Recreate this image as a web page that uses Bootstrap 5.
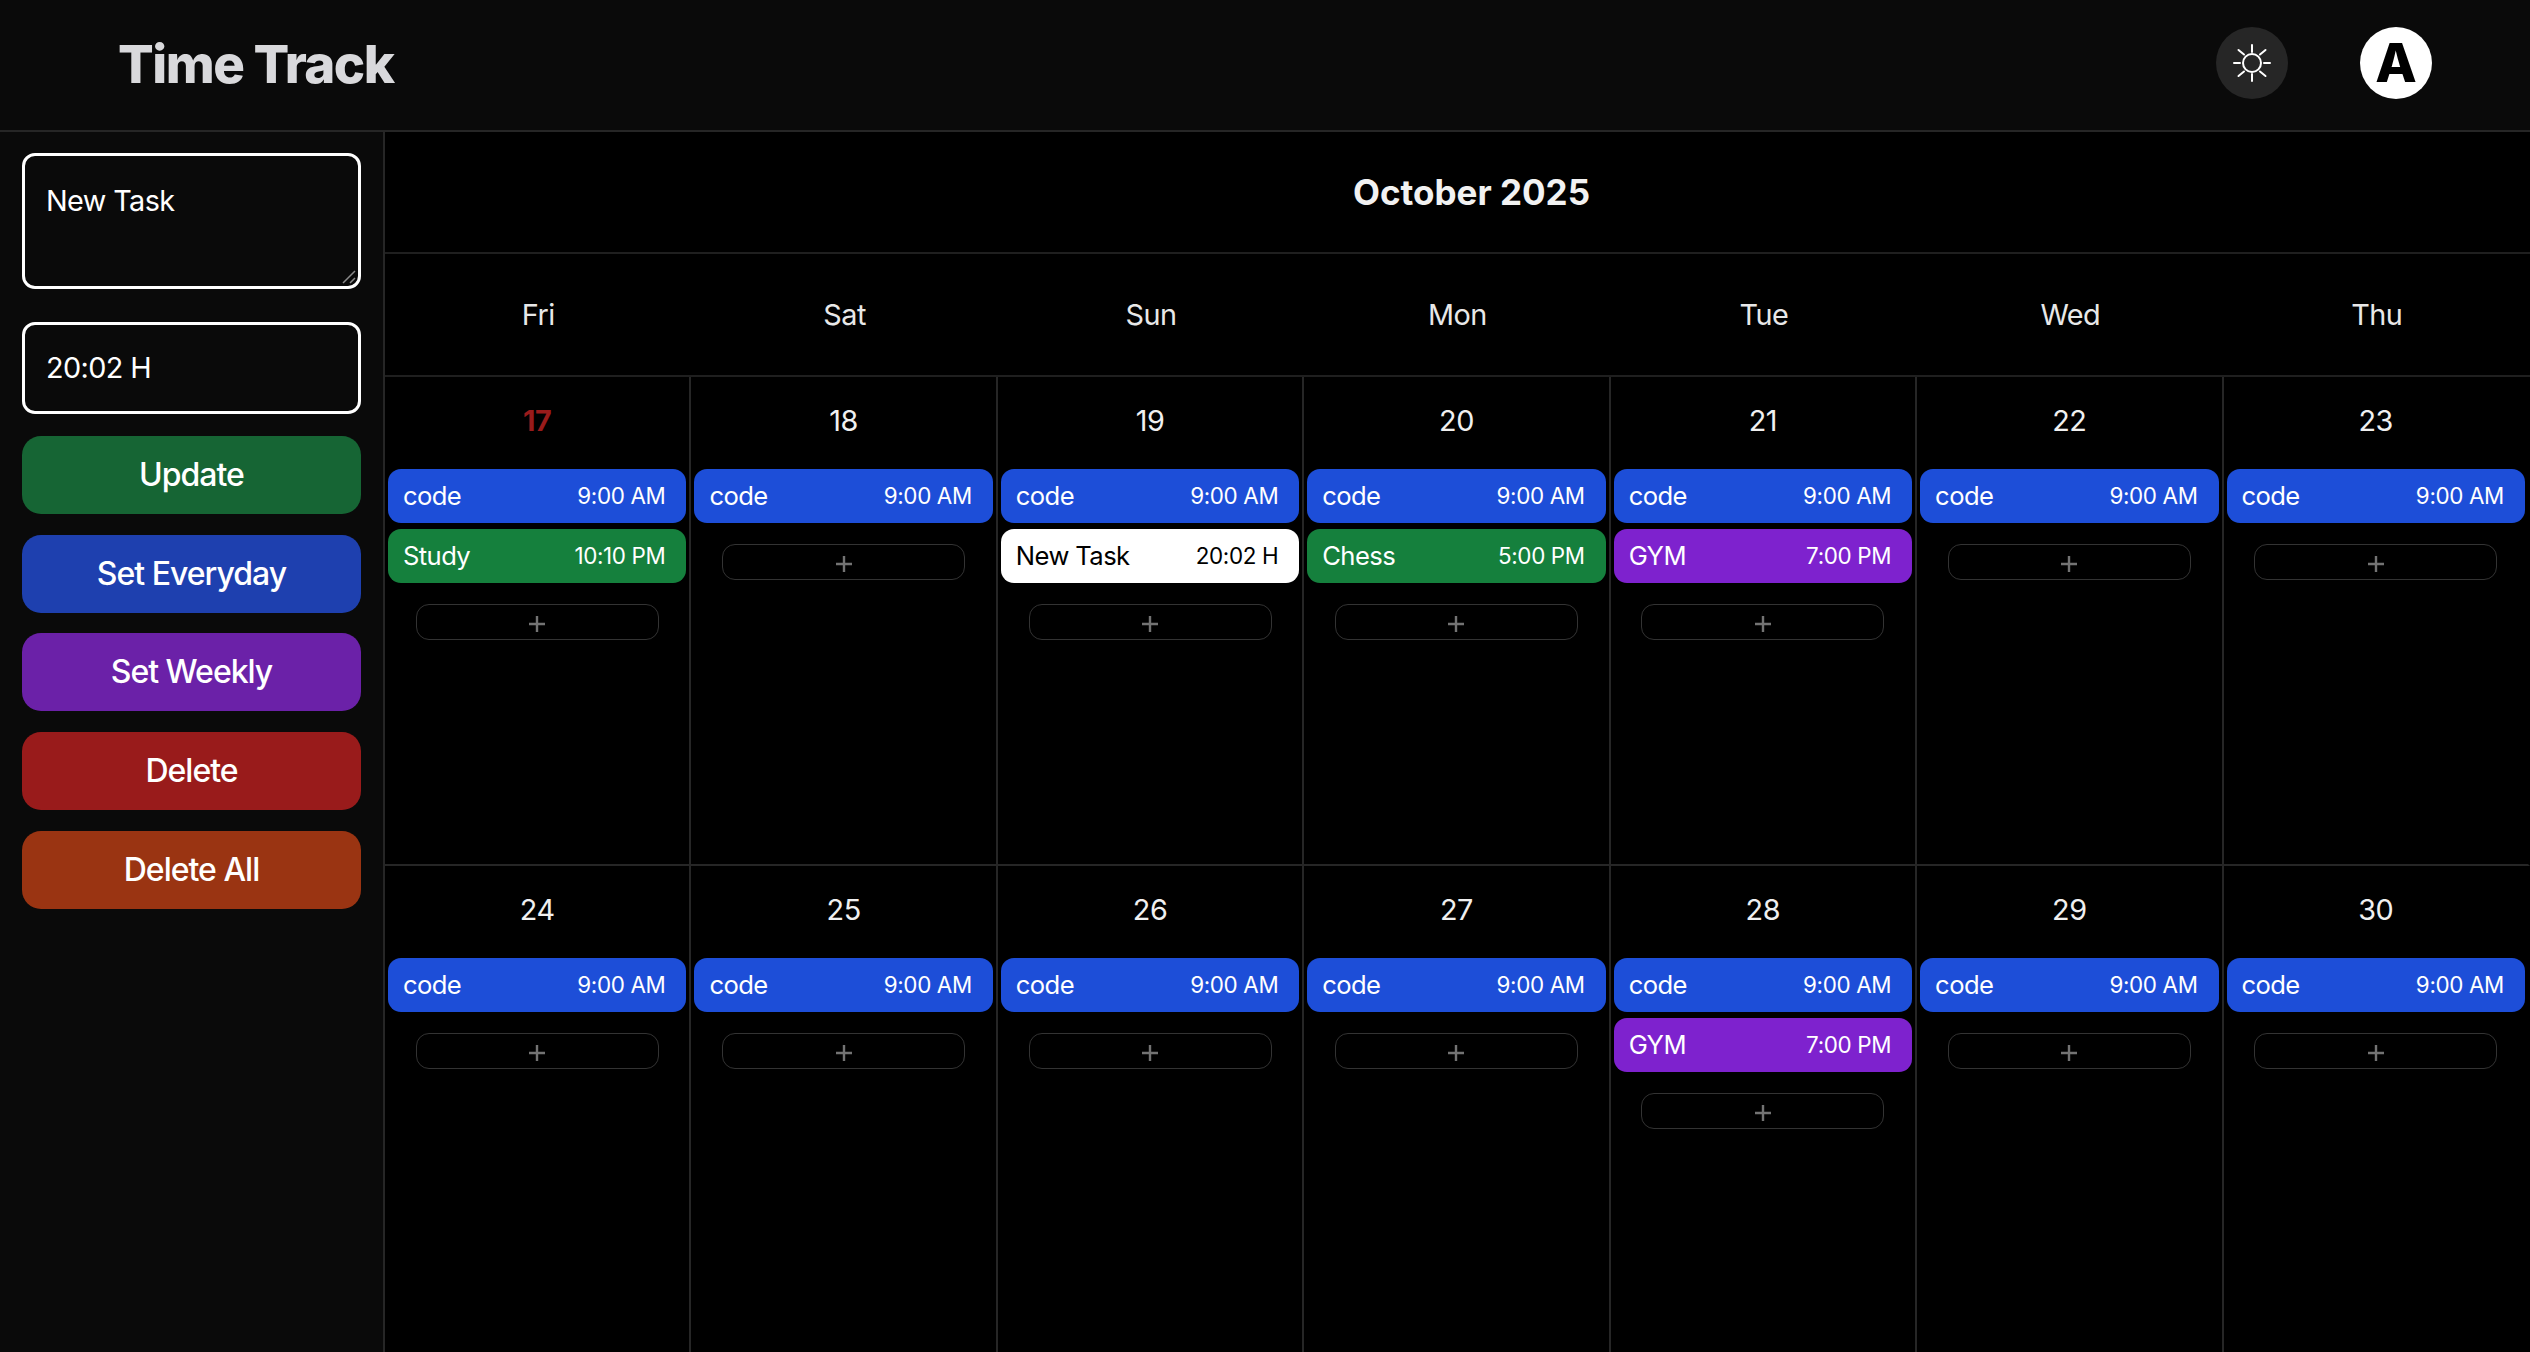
<!doctype html>
<html lang="en">
<head>
<meta charset="utf-8">
<title>Time Track</title>
<link href="https://cdn.jsdelivr.net/npm/bootstrap@5.3.0/dist/css/bootstrap.min.css" rel="stylesheet">
<style>
html,body{height:100%;}
body{background:#000;color:#fff;font-family:Inter,"Liberation Sans",sans-serif;overflow:hidden;}
.tt-top{height:132px;background:#0a0a0a;border-bottom:2px solid #262626;padding:0 98px 4px 118px;}
.tt-title{font-size:52.8px;font-weight:800;color:#d9d9dc;letter-spacing:-1.5px;margin:2px 0 0;line-height:1;}
.tt-sun{width:72px;height:72px;background:#262626;border:0;padding:0;color:#fff;margin-right:72px;}
.tt-ava{width:72px;height:72px;background:#fff;color:#000;font-size:54px;font-weight:800;line-height:1;}
.tt-main{height:1220px;}
.tt-side{width:385px;flex:0 0 385px;background:#0a0a0a;border-right:2px solid #262626;padding:21px 22px 0;}
.tt-box{margin-bottom:33px;}
.tt-grip{position:absolute;right:5px;bottom:5px;}
.tt-field{background:#0a0a0a!important;color:#fff!important;border:3px solid #fff!important;border-radius:13px;font-size:28.8px;letter-spacing:-.6px;padding:20px 21px;box-shadow:none!important;line-height:1.4;}
textarea.tt-field{height:136px;resize:none;padding-top:25px;}
input.tt-field{height:92px;margin-bottom:21.750px;padding-bottom:22px;}
.tt-act{height:78px;border:0;border-radius:19px;color:#fff;font-size:32px;font-weight:500;letter-spacing:-1px;margin-bottom:20.750px;padding:0;line-height:1;}
.tt-act:hover,.tt-act:active{color:#fff!important;}
.a-g{background:#166534!important;}.a-b{background:#1e40af!important;}.a-p{background:#6b21a8!important;}.a-r{background:#991b1b!important;}.a-o{background:#9a3412!important;}
.tt-cal{min-width:0;}
.tt-month{height:122px;font-size:35px;font-weight:700;color:#f2f2f2;border-bottom:2px solid #1f1f1f;padding-left:28px;}
.tt-wk{height:123px;font-size:28.8px;letter-spacing:-.5px;color:#e8e8e8;border-bottom:2px solid #1f1f1f;}
.tt-wk .col{text-align:center;}
.tt-cell{height:489px;border-right:2px solid #262626;border-bottom:2px solid #262626;padding:0 3px;}
.tt-cell:last-child{border-right-color:transparent;}
.tt-low .tt-cell{height:520px;}
.tt-day{height:92px;padding-top:26px;font-size:28.8px;letter-spacing:-.4px;line-height:36px;text-align:center;color:#f0f0f0;}
.tt-today{color:#991b1b;font-weight:700;}
.tt-ev{height:54px;border-radius:13px;margin-bottom:6px;padding:0 21px 0 15px;color:#fff;font-size:25.6px;letter-spacing:-.6px;line-height:1;}
.tt-ev span:last-child{font-size:22.4px;letter-spacing:-.35px;}
.e-b{background:#1d4ed8;}.e-g{background:#15803d;}.e-p{background:#7e22ce;}.e-w{background:#fff;color:#000;}
.tt-add{display:flex;align-items:center;justify-content:center;width:243px;height:36px;margin:21px auto 0;background:transparent;border:1.500px solid #333;border-radius:13px;padding:3px 0 0;color:#737373;}
</style>
</head>
<body>
<header class="tt-top d-flex align-items-center justify-content-between">
  <h1 class="tt-title">Time Track</h1>
  <div class="d-flex align-items-center">
    <button type="button" class="tt-sun rounded-circle d-flex align-items-center justify-content-center" aria-label="Theme">
      <svg width="40" height="40" viewBox="0 0 40 40" fill="none" stroke="currentColor" stroke-width="2" stroke-linecap="round"><circle cx="20" cy="20" r="9"/><path d="M20 2v7M20 31v7M2 20h6M32 20h6M6.500 7l5.500 4.500M28 28.500l5.500 4.500M6.500 33l5.500-4.500M28 11.500l5.500-4.500"/></svg>
    </button>
    <div class="tt-ava rounded-circle d-flex align-items-center justify-content-center">A</div>
  </div>
</header>
<div class="tt-main d-flex">
  <aside class="tt-side">
    <div class="tt-box position-relative">
      <textarea class="form-control tt-field">New Task</textarea>
      <svg class="tt-grip" width="14" height="14" viewBox="0 0 14 14" fill="none" stroke="#8a8a8a" stroke-width="1.500"><path d="M1 13 13 1M8 13l5-5"/></svg>
    </div>
    <input class="form-control tt-field" type="text" value="20:02 H">
    <button class="btn tt-act a-g w-100 d-block">Update</button>
    <button class="btn tt-act a-b w-100 d-block">Set Everyday</button>
    <button class="btn tt-act a-p w-100 d-block">Set Weekly</button>
    <button class="btn tt-act a-r w-100 d-block">Delete</button>
    <button class="btn tt-act a-o w-100 d-block">Delete All</button>
  </aside>
  <main class="tt-cal flex-grow-1">
    <div class="tt-month d-flex align-items-center justify-content-center">October 2025</div>
    <div class="tt-wk row g-0 align-items-center">
      <div class="col">Fri</div><div class="col">Sat</div><div class="col">Sun</div><div class="col">Mon</div><div class="col">Tue</div><div class="col">Wed</div><div class="col">Thu</div>
    </div>
    <div class="row g-0">
      <div class="col tt-cell"><div class="tt-day tt-today">17</div>
        <div class="tt-ev e-b d-flex align-items-center justify-content-between"><span>code</span><span>9:00 AM</span></div>
        <div class="tt-ev e-g d-flex align-items-center justify-content-between"><span>Study</span><span>10:10 PM</span></div>
        <button class="tt-add" aria-label="Add"><svg width="16" height="16" viewBox="0 0 16 16" stroke="currentColor" stroke-width="2.400"><path d="M8 0v16M0 8h16"/></svg></button></div>
      <div class="col tt-cell"><div class="tt-day">18</div>
        <div class="tt-ev e-b d-flex align-items-center justify-content-between"><span>code</span><span>9:00 AM</span></div>
        <button class="tt-add" aria-label="Add"><svg width="16" height="16" viewBox="0 0 16 16" stroke="currentColor" stroke-width="2.400"><path d="M8 0v16M0 8h16"/></svg></button></div>
      <div class="col tt-cell"><div class="tt-day">19</div>
        <div class="tt-ev e-b d-flex align-items-center justify-content-between"><span>code</span><span>9:00 AM</span></div>
        <div class="tt-ev e-w d-flex align-items-center justify-content-between"><span>New Task</span><span>20:02 H</span></div>
        <button class="tt-add" aria-label="Add"><svg width="16" height="16" viewBox="0 0 16 16" stroke="currentColor" stroke-width="2.400"><path d="M8 0v16M0 8h16"/></svg></button></div>
      <div class="col tt-cell"><div class="tt-day">20</div>
        <div class="tt-ev e-b d-flex align-items-center justify-content-between"><span>code</span><span>9:00 AM</span></div>
        <div class="tt-ev e-g d-flex align-items-center justify-content-between"><span>Chess</span><span>5:00 PM</span></div>
        <button class="tt-add" aria-label="Add"><svg width="16" height="16" viewBox="0 0 16 16" stroke="currentColor" stroke-width="2.400"><path d="M8 0v16M0 8h16"/></svg></button></div>
      <div class="col tt-cell"><div class="tt-day">21</div>
        <div class="tt-ev e-b d-flex align-items-center justify-content-between"><span>code</span><span>9:00 AM</span></div>
        <div class="tt-ev e-p d-flex align-items-center justify-content-between"><span>GYM</span><span>7:00 PM</span></div>
        <button class="tt-add" aria-label="Add"><svg width="16" height="16" viewBox="0 0 16 16" stroke="currentColor" stroke-width="2.400"><path d="M8 0v16M0 8h16"/></svg></button></div>
      <div class="col tt-cell"><div class="tt-day">22</div>
        <div class="tt-ev e-b d-flex align-items-center justify-content-between"><span>code</span><span>9:00 AM</span></div>
        <button class="tt-add" aria-label="Add"><svg width="16" height="16" viewBox="0 0 16 16" stroke="currentColor" stroke-width="2.400"><path d="M8 0v16M0 8h16"/></svg></button></div>
      <div class="col tt-cell"><div class="tt-day">23</div>
        <div class="tt-ev e-b d-flex align-items-center justify-content-between"><span>code</span><span>9:00 AM</span></div>
        <button class="tt-add" aria-label="Add"><svg width="16" height="16" viewBox="0 0 16 16" stroke="currentColor" stroke-width="2.400"><path d="M8 0v16M0 8h16"/></svg></button></div>
    </div>
    <div class="row g-0 tt-low">
      <div class="col tt-cell"><div class="tt-day">24</div>
        <div class="tt-ev e-b d-flex align-items-center justify-content-between"><span>code</span><span>9:00 AM</span></div>
        <button class="tt-add" aria-label="Add"><svg width="16" height="16" viewBox="0 0 16 16" stroke="currentColor" stroke-width="2.400"><path d="M8 0v16M0 8h16"/></svg></button></div>
      <div class="col tt-cell"><div class="tt-day">25</div>
        <div class="tt-ev e-b d-flex align-items-center justify-content-between"><span>code</span><span>9:00 AM</span></div>
        <button class="tt-add" aria-label="Add"><svg width="16" height="16" viewBox="0 0 16 16" stroke="currentColor" stroke-width="2.400"><path d="M8 0v16M0 8h16"/></svg></button></div>
      <div class="col tt-cell"><div class="tt-day">26</div>
        <div class="tt-ev e-b d-flex align-items-center justify-content-between"><span>code</span><span>9:00 AM</span></div>
        <button class="tt-add" aria-label="Add"><svg width="16" height="16" viewBox="0 0 16 16" stroke="currentColor" stroke-width="2.400"><path d="M8 0v16M0 8h16"/></svg></button></div>
      <div class="col tt-cell"><div class="tt-day">27</div>
        <div class="tt-ev e-b d-flex align-items-center justify-content-between"><span>code</span><span>9:00 AM</span></div>
        <button class="tt-add" aria-label="Add"><svg width="16" height="16" viewBox="0 0 16 16" stroke="currentColor" stroke-width="2.400"><path d="M8 0v16M0 8h16"/></svg></button></div>
      <div class="col tt-cell"><div class="tt-day">28</div>
        <div class="tt-ev e-b d-flex align-items-center justify-content-between"><span>code</span><span>9:00 AM</span></div>
        <div class="tt-ev e-p d-flex align-items-center justify-content-between"><span>GYM</span><span>7:00 PM</span></div>
        <button class="tt-add" aria-label="Add"><svg width="16" height="16" viewBox="0 0 16 16" stroke="currentColor" stroke-width="2.400"><path d="M8 0v16M0 8h16"/></svg></button></div>
      <div class="col tt-cell"><div class="tt-day">29</div>
        <div class="tt-ev e-b d-flex align-items-center justify-content-between"><span>code</span><span>9:00 AM</span></div>
        <button class="tt-add" aria-label="Add"><svg width="16" height="16" viewBox="0 0 16 16" stroke="currentColor" stroke-width="2.400"><path d="M8 0v16M0 8h16"/></svg></button></div>
      <div class="col tt-cell"><div class="tt-day">30</div>
        <div class="tt-ev e-b d-flex align-items-center justify-content-between"><span>code</span><span>9:00 AM</span></div>
        <button class="tt-add" aria-label="Add"><svg width="16" height="16" viewBox="0 0 16 16" stroke="currentColor" stroke-width="2.400"><path d="M8 0v16M0 8h16"/></svg></button></div>
    </div>
  </main>
</div>
<script src="https://cdn.jsdelivr.net/npm/bootstrap@5.3.0/dist/js/bootstrap.bundle.min.js"></script>
</body>
</html>
